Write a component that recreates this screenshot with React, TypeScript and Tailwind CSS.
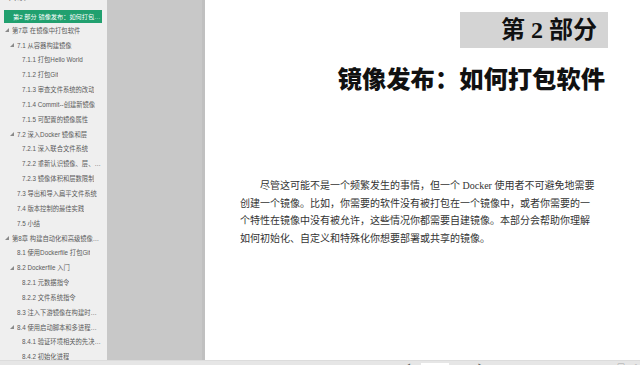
import React from 'react';

type Item = { label: string; indent: number; arrow?: boolean };

const items: Item[] = [
  { label: '第7章 在镜像中打包软件', indent: 0, arrow: true },
  { label: '7.1 从容器构建镜像', indent: 1, arrow: true },
  { label: '7.1.1 打包Hello World', indent: 2 },
  { label: '7.1.2 打包Git', indent: 2 },
  { label: '7.1.3 审查文件系统的改动', indent: 2 },
  { label: '7.1.4 Commit--创建新镜像', indent: 2 },
  { label: '7.1.5 可配置的镜像属性', indent: 2 },
  { label: '7.2 深入Docker 镜像和层', indent: 1, arrow: true },
  { label: '7.2.1 深入联合文件系统', indent: 2 },
  { label: '7.2.2 重新认识镜像、层、仓库和标签', indent: 2 },
  { label: '7.2.3 镜像体积和层数限制', indent: 2 },
  { label: '7.3 导出和导入扁平文件系统', indent: 1 },
  { label: '7.4 版本控制的最佳实践', indent: 1 },
  { label: '7.5 小结', indent: 1 },
  { label: '第8章 构建自动化和高级镜像设置', indent: 0, arrow: true },
  { label: '8.1 使用Dockerfile 打包Git', indent: 1 },
  { label: '8.2 Dockerfile 入门', indent: 1, arrow: true },
  { label: '8.2.1 元数据指令', indent: 2 },
  { label: '8.2.2 文件系统指令', indent: 2 },
  { label: '8.3 注入下游镜像在构建时发生的操作', indent: 1 },
  { label: '8.4 使用启动脚本和多进程容器', indent: 1, arrow: true },
  { label: '8.4.1 验证环境相关的先决条件', indent: 2 },
  { label: '8.4.2 初始化进程', indent: 2 },
];

const indentClass = ['pl-[12px]', 'pl-[17px]', 'pl-[22px]'];
const arrowClass = ['left-[5px]', 'left-[10px]', 'left-[15px]'];

const Arrow = () => (
  <svg width="4" height="4" viewBox="0 0 4 4" className="block">
    <path d="M4 0 L4 4 L0 4 Z" fill="#8a8a8a" />
  </svg>
);

const Sidebar = () => (
  <div
    className="w-[107px] shrink-0 bg-[#efefef] overflow-hidden"
    style={{ fontFamily: '"Liberation Sans", "Noto Sans CJK SC", sans-serif' }}
  >
    <div className="h-[10px] overflow-hidden relative">
      <div className="flex justify-between px-[8px] -mt-[8px] text-[9px] leading-[10px] text-[#777]">
        <span>目录</span>
        <span>⊻</span>
      </div>
    </div>
    <div className="ml-[4px] mr-[5px] h-[13px] bg-[#21a06f] flex items-center pl-[9px] pr-[1px] text-[6.2px] text-white whitespace-nowrap overflow-hidden">
      <span className="truncate">第2 部分 镜像发布：如何打包软件</span>
    </div>
    {items.map((it) => (
      <div key={it.label} className={`relative h-[14.85px] flex items-center pr-[4px] ${indentClass[it.indent]}`}>
        {it.arrow && (
          <span className={`absolute top-[5px] ${arrowClass[it.indent]}`}>
            <Arrow />
          </span>
        )}
        <span className="truncate whitespace-nowrap text-[6.3px] text-[#5a5a5a]">{it.label}</span>
      </div>
    ))}
  </div>
);

const Page = () => (
  <div className="flex-1 bg-white flex flex-col pt-[12px]">
    <div className="self-end mr-[32px] w-[148px] h-[36px] bg-[#d4d4d4] flex items-center justify-end pr-[11px]">
      <span
        className="text-[24px] leading-[24px] font-bold text-[#111] whitespace-pre"
        style={{ fontFamily: '"Liberation Serif", "Noto Sans CJK SC", serif' }}
      >
        第 2 部分
      </span>
    </div>
    <div
      className="self-end mr-[35px] mt-[18px] text-[24.3px] leading-[24px] font-black text-[#111] whitespace-nowrap"
      style={{ fontFamily: '"Noto Sans CJK SC", sans-serif' }}
    >
      镜像发布：如何打包软件
    </div>
    <div
      className="ml-[35px] mt-[87px] w-[350px] text-[10px] leading-[17.5px] text-[#333]"
      style={{ fontFamily: '"Liberation Serif", "Noto Sans CJK SC", serif' }}
    >
      <div className="pl-[20px] text-justify [text-align-last:justify] whitespace-nowrap">
        尽管这可能不是一个频繁发生的事情，但一个 Docker 使用者不可避免地需要
      </div>
      <div className="text-justify [text-align-last:justify] whitespace-nowrap">
        创建一个镜像。比如，你需要的软件没有被打包在一个镜像中，或者你需要的一
      </div>
      <div className="text-justify [text-align-last:justify] whitespace-nowrap">
        个特性在镜像中没有被允许，这些情况你都需要自建镜像。本部分会帮助你理解
      </div>
      <div className="whitespace-nowrap">如何初始化、自定义和特殊化你想要部署或共享的镜像。</div>
    </div>
  </div>
);

const BottomBar = () => (
  <div
    className="h-[20px] shrink-0 bg-[#e6e6e6] border-t border-[#dcdcdc] flex items-start pt-[2px] text-[8px] leading-[10px] text-[#666]"
    style={{ fontFamily: '"Liberation Sans", "Noto Sans CJK SC", sans-serif' }}
  >
    <div className="ml-[392px] flex items-start gap-[4px]">
      <span>⏮</span>
      <span>◀</span>
    </div>
    <div className="ml-[10px] w-[28px] h-[12px] bg-white text-center text-[#444]">4/6</div>
    <div className="ml-[6px]">(2/8)</div>
    <div className="ml-[6px] flex gap-[4px]">
      <span>▶</span>
      <span>⏭</span>
    </div>
    <div className="ml-auto mr-[3px] flex gap-[6px]">
      <span>▣</span>
      <span>⤢</span>
    </div>
  </div>
);

export default function App() {
  return (
    <div className="w-[640px] h-[365px] overflow-hidden flex flex-col bg-white">
      <div className="h-[360px] shrink-0 flex">
        <Sidebar />
        <div className="w-[98px] shrink-0 bg-[#c8c8c8] border-r-[3px] border-[#c0c0c0]" />
        <Page />
      </div>
      <BottomBar />
    </div>
  );
}
